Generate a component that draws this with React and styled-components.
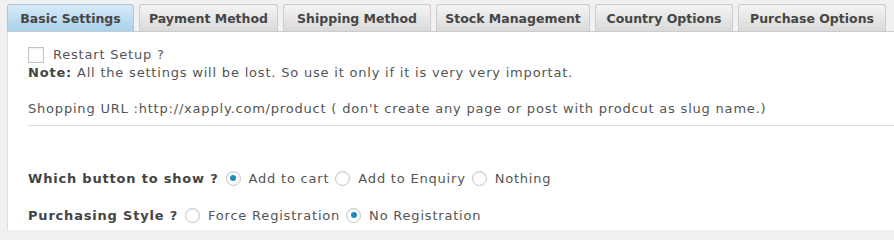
import React from "react";
import styled, { createGlobalStyle } from "styled-components";

const Global = createGlobalStyle`
  html, body { margin: 0; padding: 0; background: #f1f1f1; overflow: hidden; }
  body { font-family: "DejaVu Sans", Verdana, sans-serif; font-size: 13px; color: #555; }
`;

const Wrap = styled.div`
  padding: 4px 0 0 7px;
  width: 894px;
  box-sizing: border-box;
  height: 230px;
  overflow: hidden;
`;

const TabBar = styled.div`
  display: flex;
  gap: 5px;
  align-items: flex-end;
  border-bottom: 1px solid #ccc;
  height: 27px;
`;

const Tab = styled.div`
  height: 27px;
  box-sizing: border-box;
  padding: 0 12px;
  display: flex;
  align-items: center;
  justify-content: center;
  border: 1px solid #ccc;
  border-bottom: none;
  border-radius: 3px 3px 0 0;
  font-weight: bold;
  font-size: 12.5px;
  color: #464646;
  white-space: nowrap;
  width: ${(p) => p.$w}px;
  background: ${(p) =>
    p.$active
      ? "linear-gradient(to bottom, #d6eaf7 0%, #a9d2ec 100%)"
      : "linear-gradient(to bottom, #f4f4f4 0%, #d9d9d9 100%)"};
  border-color: ${(p) => (p.$active ? "#a9c7dc" : "#ccc")};
`;

const Panel = styled.div`
  background: #fff;
  border-left: 1px solid #ddd;
  padding: 14px 0 0 20px;
  height: 198px;
  box-sizing: border-box;
  letter-spacing: 0.8px;
`;

const CheckRow = styled.label`
  display: flex;
  align-items: center;
  gap: 9px;
  height: 18px;
  line-height: 18px;
`;

const CheckBox = styled.span`
  width: 16px;
  height: 16px;
  box-sizing: border-box;
  border: 1px solid #c0c4c8;
  background: #fff;
  box-shadow: inset 0 1px 2px rgba(0, 0, 0, 0.07);
  display: inline-block;
`;

const Line = styled.div`
  line-height: 17px;
  margin-top: ${(p) => p.$mt || 0}px;
  white-space: nowrap;
`;

const Rule = styled.div`
  border-top: 1px solid #ddd;
  margin-top: 8px;
`;

const Bold = styled.b`
  color: #444;
  font-weight: bold;
`;

const FormRow = styled.div`
  display: flex;
  align-items: center;
  height: 20px;
  margin-top: ${(p) => p.$mt}px;
  white-space: nowrap;
`;

const Label = styled.span`
  font-weight: bold;
  color: #444;
  margin-right: 7px;
`;

const Radio = styled.span`
  width: 15px;
  height: 15px;
  flex: none;
  box-sizing: border-box;
  border-radius: 50%;
  border: 1px solid #c0c4c8;
  background: #fff;
  box-shadow: inset 0 1px 2px rgba(0, 0, 0, 0.07);
  display: inline-flex;
  align-items: center;
  justify-content: center;
  margin-right: 8px;
  &::after {
    content: "";
    width: 6px;
    height: 6px;
    border-radius: 50%;
    background: ${(p) => (p.$on ? "#1e8cbe" : "transparent")};
  }
`;

const Opt = styled.span`
  margin-right: 6px;
`;

const tabs = [
  ["Basic Settings", 127],
  ["Payment Method", 139],
  ["Shipping Method", 148],
  ["Stock Management", 154],
  ["Country Options", 138],
  ["Purchase Options", 148],
];

export default function App() {
  return (
    <>
      <Global />
      <Wrap>
        <TabBar>
          {tabs.map(([t, w], i) => (
            <Tab key={t} $active={i === 0} $w={w}>
              {t}
            </Tab>
          ))}
        </TabBar>
        <Panel>
          <CheckRow>
            <CheckBox />
            <span>Restart Setup ?</span>
          </CheckRow>
          <Line>
            <Bold>Note:</Bold> All the settings will be lost. So use it only if it is very very importat.
          </Line>
          <Line $mt={19}>
            Shopping URL :http://xapply.com/product ( don't create any page or post with prodcut as slug name.)
          </Line>
          <Rule />
          <FormRow $mt={42}>
            <Label>Which button to show ?</Label>
            <Radio $on />
            <Opt>Add to cart</Opt>
            <Radio />
            <Opt>Add to Enquiry</Opt>
            <Radio />
            <Opt>Nothing</Opt>
          </FormRow>
          <FormRow $mt={17}>
            <Label>Purchasing Style ?</Label>
            <Radio />
            <Opt>Force Registration</Opt>
            <Radio $on />
            <Opt>No Registration</Opt>
          </FormRow>
        </Panel>
      </Wrap>
    </>
  );
}
